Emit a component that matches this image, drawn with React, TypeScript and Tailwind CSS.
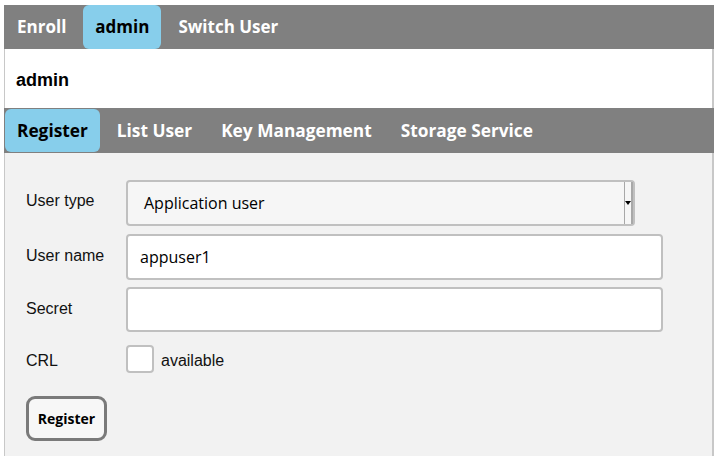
import React from "react";

const ub = { fontFamily: '"Open Sans", "DejaVu Sans", sans-serif' };
const ar = { fontFamily: '"Liberation Sans", Arial, sans-serif' };

function Tab({ label, active, big }: { label: string; active?: boolean; big?: boolean }) {
  return (
    <div
      className={`h-full flex items-center px-[12px] rounded-[6px] font-bold ${
        big ? "text-[17.3px]" : "text-[17px]"
      } ${active ? "bg-[#87ceeb] text-black" : "text-white"}`}
      style={ub}
    >
      {label}
    </div>
  );
}

export default function App() {
  return (
    <div className="w-[718px] h-[456px] bg-white overflow-hidden">
      <div className="ml-[4px] mt-[5px] w-[710px]">
        <div className="h-[44px] bg-[#808080] flex items-stretch gap-[5px] pl-[1px]">
          <Tab label="Enroll" />
          <Tab label="admin" active />
          <Tab label="Switch User" />
        </div>
        <div className="h-[59px] bg-white border-l border-r-2 border-[#c8c8c8] flex items-center pl-[11px] pt-[3px]">
          <span className="font-bold text-[18px] text-black" style={ar}>
            admin
          </span>
        </div>
        <div className="h-[45px] bg-[#808080] flex items-stretch gap-[5px] pl-[1px] py-[1px]">
          <Tab label="Register" active big />
          <Tab label="List User" big />
          <Tab label="Key Management" big />
          <Tab label="Storage Service" big />
        </div>
        <div className="h-[320px] bg-[#f2f2f2] border-l border-r-2 border-[#c8c8c8] pl-[21px] pt-[27px]">
          <div className="flex items-center h-[46px]">
            <div className="w-[100px] text-[16px] text-[#111] -mt-[5px]" style={ar}>
              User type
            </div>
            <div className="relative w-[509px] h-[46px] bg-[#f6f6f6] border-2 border-[#c0c0c0] rounded-[4px] flex items-center pl-[16px]">
              <span className="text-[16px] text-black" style={ub}>
                Application user
              </span>
              <div className="absolute right-[0px] top-0 bottom-0 w-[9px] bg-[#f6f6f6] border-l border-r-2 border-[#a8a8a8] flex items-center justify-center">
                <svg width="6" height="4" viewBox="0 0 6 4">
                  <path d="M0 0 L6 0 L3 4 Z" fill="#000" />
                </svg>
              </div>
            </div>
          </div>
          <div className="flex items-center h-[46px] mt-[8px]">
            <div className="w-[100px] text-[16px] text-[#111] -mt-[2px]" style={ar}>
              User name
            </div>
            <div className="w-[537px] h-[46px] bg-white border-2 border-[#c0c0c0] rounded-[4px] flex items-center pl-[12px]">
              <span className="text-[16px] text-black" style={ub}>
                appuser1
              </span>
            </div>
          </div>
          <div className="flex items-center h-[45px] mt-[7px]">
            <div className="w-[100px] text-[16px] text-[#111] -mt-[2px]" style={ar}>
              Secret
            </div>
            <div className="w-[537px] h-[45px] bg-white border-2 border-[#c0c0c0] rounded-[4px]" />
          </div>
          <div className="flex items-center h-[28px] mt-[13px]">
            <div className="w-[100px] text-[16px] text-[#111] mt-[4px]" style={ar}>
              CRL
            </div>
            <div className="w-[28px] h-[28px] bg-white border-2 border-[#c0c0c0] rounded-[4px]" />
            <span className="ml-[7px] text-[16px] text-[#111] mt-[4px]" style={ar}>
              available
            </span>
          </div>
          <div className="mt-[23px]">
            <button
              className="w-[81px] h-[45px] bg-[#f7f7f7] border-[3px] border-[#7a7a7a] rounded-[9px] font-bold text-[14px] text-black"
              style={ub}
            >
              Register
            </button>
          </div>
        </div>
      </div>
    </div>
  );
}
